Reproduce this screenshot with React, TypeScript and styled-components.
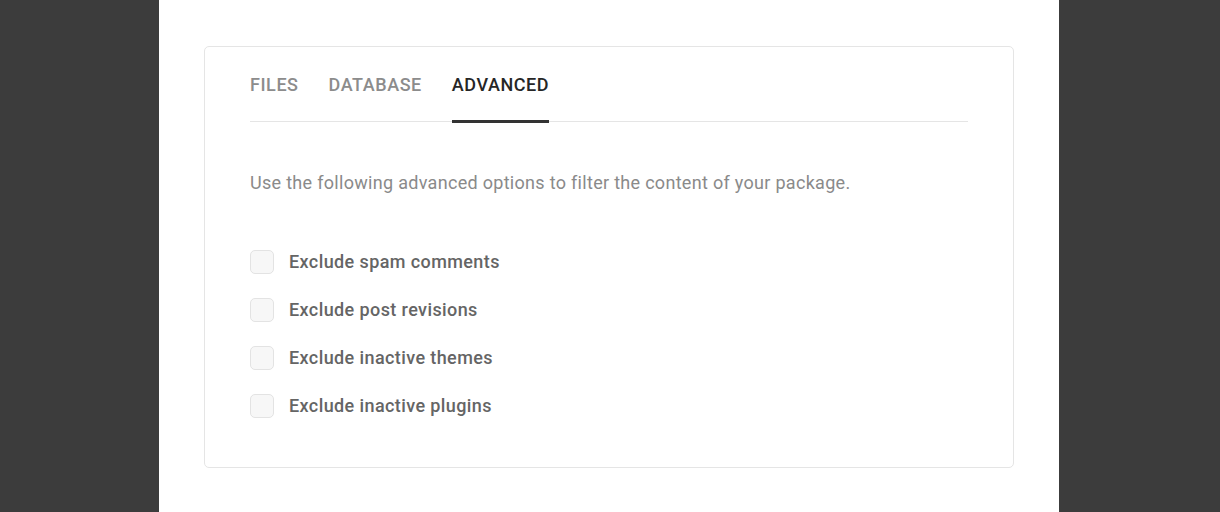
import React, { useState } from "react";
import styled, { createGlobalStyle } from "styled-components";

const GlobalStyle = createGlobalStyle`
  html, body {
    margin: 0;
    padding: 0;
    background: #3c3c3c;
  }
  body {
    font-family: Roboto, "Liberation Sans", Arial, sans-serif;
  }
`;

const Page = styled.div`
  display: flex;
  justify-content: center;
  min-height: 512px;
  padding-right: 2px;
`;

const Column = styled.div`
  width: 900px;
  background: #ffffff;
  padding: 46px 45px 44px;
  box-sizing: border-box;
`;

const Card = styled.div`
  border: 1px solid #e5e5e5;
  border-radius: 5px;
  padding: 0 45px 36px;
  box-sizing: border-box;
  height: 422px;
`;

const TabBar = styled.div`
  display: flex;
  gap: 30px;
  border-bottom: 1px solid #e5e5e5;
`;

const Tab = styled.button<{ $active?: boolean }>`
  appearance: none;
  background: none;
  border: none;
  border-bottom: 3px solid ${(p) => (p.$active ? "#333333" : "transparent")};
  margin: 0 0 -2px;
  padding: 27px 0 25px;
  font-family: inherit;
  font-size: 18px;
  line-height: 21px;
  font-weight: 500;
  letter-spacing: 0.55px;
  color: ${(p) => (p.$active ? "#262626" : "#8c8c8c")};
  cursor: pointer;
`;

const Description = styled.p`
  margin: 51px 0 0;
  font-size: 18px;
  line-height: 20px;
  letter-spacing: 0.3px;
  color: #8a8a8a;
`;

const OptionList = styled.div`
  display: flex;
  flex-direction: column;
  gap: 24px;
  margin-top: 57px;
`;

const Option = styled.label`
  display: flex;
  align-items: center;
  gap: 15px;
  cursor: pointer;
  height: 24px;
`;

const Box = styled.span<{ $checked?: boolean }>`
  width: 22px;
  height: 22px;
  border: 1px solid #e3e3e3;
  border-radius: 5px;
  background: #f7f7f7;
  display: flex;
  align-items: center;
  justify-content: center;
  flex-shrink: 0;
`;

const Label = styled.span`
  font-size: 18px;
  font-weight: 500;
  letter-spacing: 0.4px;
  color: #656565;
  line-height: 24px;
`;

const tabs = ["FILES", "DATABASE", "ADVANCED"];
const options = [
  "Exclude spam comments",
  "Exclude post revisions",
  "Exclude inactive themes",
  "Exclude inactive plugins",
];

export default function App() {
  const [active, setActive] = useState(2);
  const [checked, setChecked] = useState<boolean[]>([false, false, false, false]);
  return (
    <>
      <GlobalStyle />
      <Page>
        <Column>
          <Card>
            <TabBar>
              {tabs.map((t, i) => (
                <Tab key={t} $active={i === active} onClick={() => setActive(i)}>
                  {t}
                </Tab>
              ))}
            </TabBar>
            <Description>
              Use the following advanced options to filter the content of your package.
            </Description>
            <OptionList>
              {options.map((o, i) => (
                <Option
                  key={o}
                  onClick={() =>
                    setChecked((c) => c.map((v, j) => (j === i ? !v : v)))
                  }
                >
                  <Box $checked={checked[i]}>
                    {checked[i] && (
                      <svg width="14" height="14" viewBox="0 0 14 14">
                        <path d="M2 7l3 3 7-7" stroke="#555" strokeWidth="2" fill="none" />
                      </svg>
                    )}
                  </Box>
                  <Label>{o}</Label>
                </Option>
              ))}
            </OptionList>
          </Card>
        </Column>
      </Page>
    </>
  );
}
